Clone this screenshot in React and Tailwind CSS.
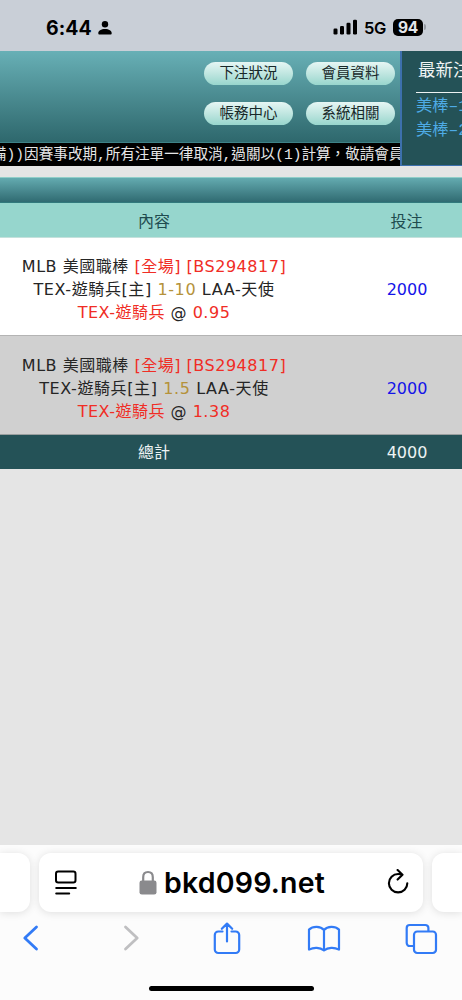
import React from "react";

const MENU = ["下注狀況", "會員資料", "帳務中心", "系統相關"];

const BETS = [
  { id: 1, bg: "bg-white h-[98px] border-[#b4b4b4]", pad: "pt-[5px]", line: "1-10", odds: "0.95" },
  { id: 2, bg: "bg-[#d0d0d0] h-[99px] border-[#9a9f9f]", pad: "pt-[6px]", line: "1.5", odds: "1.38" },
];

const SANS = "font-['DejaVu_Sans','Noto_Sans_CJK_TC',sans-serif]";
const MONO = "font-['Liberation_Mono','Noto_Sans_CJK_TC',monospace]";

function StatusBar() {
  return (
    <div className="flex h-[51px] shrink-0 items-start bg-[#c9cfd7] pt-[18px] font-['Inter',sans-serif] text-black">
      <span className="ml-[46px] w-[47px] text-[19.5px] leading-5 font-bold tracking-[0.05px]">6:44</span>
      <svg className="mt-[3px] ml-[5px]" width="14" height="14" viewBox="0 0 14 14">
        <circle cx="7" cy="3.3" r="3.2" />
        <path d="M.3 12.300C.3 9.700 3 8 7 8s6.700 1.700 6.700 4.300c0 .8-.4 1.200-1.200 1.200h-11c-.8 0-1.200-.4-1.200-1.200z" />
      </svg>
      <div className="grow" />
      <svg className="mt-[1px]" width="25" height="16" viewBox="0 0 25 16">
        <rect x=".5" y="9.500" width="4" height="6" rx="1.200" />
        <rect x="7" y="7" width="4" height="8.500" rx="1.200" />
        <rect x="13.500" y="3.800" width="4" height="11.700" rx="1.200" />
        <rect x="20" y=".8" width="4" height="14.700" rx="1.200" />
      </svg>
      <span className="ml-[6px] w-[23px] text-[16.5px] leading-5 font-semibold tracking-[-0.4px]">5G</span>
      <div className="ml-[6px] mt-[1px] h-[17px] w-[30px] rounded-[5px] bg-black text-center text-[15.5px] leading-[18px] font-bold tracking-[-0.2px] text-[#e3e6eb]">
        94
      </div>
      <div className="mt-[6px] mr-[36px] ml-[1px] h-[6px] w-[2px] rounded-r-full bg-[#979ca3]" />
    </div>
  );
}

function Header() {
  return (
    <div className="flex h-[115px] shrink-0">
      <div className="flex w-[400px] shrink-0 flex-col">
        <div className="h-[92px] border-b border-[#3e8287] bg-linear-to-b from-[#68b0b6] to-[#2e686d] pt-[11px] pl-[204px]">
          <div className="grid w-[191px] grid-cols-[89px_89px] gap-x-[13px] gap-y-[17px]">
            {MENU.map((label) => (
              <button
                key={label}
                className={`h-[23px] rounded-full bg-linear-to-b from-[#e6f6f4] to-[#98d6cd] pt-px text-center text-[14.5px] leading-[22px] whitespace-nowrap text-[#172829] ${MONO}`}
              >
                {label}
              </button>
            ))}
          </div>
        </div>
        <div className={`h-[23px] overflow-hidden bg-black text-[14.6px] leading-[24px] whitespace-nowrap text-[#e6e6e6] ${MONO}`}>
          <div className="ml-[-8px]">備))因賽事改期,所有注單一律取消,過關以(1)計算，敬請會員</div>
        </div>
      </div>
      <div className={`w-[62px] overflow-hidden border-b border-l-2 border-[#3d70ad] bg-[#245257] whitespace-nowrap ${MONO}`}>
        <div className="pt-[8px] pl-[16px] text-[17.5px] leading-6 text-[#f0f5f5]">最新注</div>
        <div className="mt-[9px] ml-[14px] border-t border-[#edf3f3] pt-[2px] text-[16.3px] leading-6 text-[#4eabe5]">
          <div>美棒–1</div>
          <div>美棒–2</div>
        </div>
      </div>
    </div>
  );
}

function BetTable() {
  return (
    <div className={`text-[16px] leading-[23px] whitespace-nowrap text-[#252525] ${SANS}`}>
      <div className="h-[26px] border-t border-b border-t-[#91cec9] border-b-[#327a7d] bg-linear-to-b from-[#64abb0] to-[#306b72]" />
      <div className="grid h-[35px] grid-cols-[308px_154px] items-center border-b border-[#c5e1dc] bg-[#96d6cd] pt-[2px] text-center text-[#204b4f]">
        <span>內容</span>
        <span className="pr-[3px] pl-[46px]">投注</span>
      </div>
      {BETS.map((bet) => (
        <div key={bet.id} className={`grid grid-cols-[308px_154px] items-center border-b text-center ${bet.bg} ${bet.pad}`}>
          <div>
            <div className="tracking-[0.52px]">
              MLB 美國職棒 <span className="text-[#f02d25]">[全場] [BS294817]</span>
            </div>
            <div className="tracking-[0.6px]">
              TEX-遊騎兵[主] <span className="text-[#b5923a]">{bet.line}</span> LAA-天使
            </div>
            <div className="tracking-[0.5px]">
              <span className="text-[#f02d25]">TEX-遊騎兵</span> @ <span className="text-[#f02d25]">{bet.odds}</span>
            </div>
          </div>
          <div className="pr-[3px] pl-[47px] text-[#1414e8]">2000</div>
        </div>
      ))}
      <div className="grid h-[34px] grid-cols-[308px_154px] items-center bg-[#245257] text-center text-[#edf3f3]">
        <span>總計</span>
        <span className="pr-[3px] pl-[47px]">4000</span>
      </div>
    </div>
  );
}

function BrowserBar() {
  return (
    <div className="flex h-[155px] shrink-0 flex-col bg-[#fcfcfc]">
      <div className="flex h-[77px] justify-between overflow-hidden pt-[8px]">
        <div className="h-[59px] w-[30px] rounded-r-[12px] bg-white shadow-[0_1px_9px_rgba(0,0,0,0.12)]" />
        <div className="flex h-[59px] w-[384px] items-center rounded-[12px] bg-white shadow-[0_1px_9px_rgba(0,0,0,0.12)]">
          <svg className="ml-[15px] shrink-0" width="24" height="28" viewBox="0 0 24 28" fill="none" stroke="#000" strokeWidth="2" strokeLinecap="round">
            <rect x="2" y="2.500" width="19.500" height="11" rx="2.200" />
            <path d="M2.200 19h19.600M2.200 24.500h13" />
          </svg>
          <svg className="ml-[61px] shrink-0" width="18" height="26" viewBox="0 0 18 26">
            <path d="M4.200 12V7.200C4.200 4 6.100 2 9 2s4.800 2 4.800 5.200V12" fill="none" stroke="#8a8a8d" strokeWidth="2.200" />
            <rect x=".5" y="10.500" width="17" height="14" rx="2.300" fill="#8a8a8d" />
          </svg>
          <span className="ml-[7px] w-[162px] font-['Inter',sans-serif] text-[28.500px] leading-8 font-semibold tracking-[0.2px] text-black">bkd099.net</span>
          <svg className="ml-[60px] shrink-0" width="24" height="28" viewBox="0 0 24 28" fill="none" stroke="#000" strokeWidth="2.100" strokeLinecap="round" strokeLinejoin="round">
            <path d="M21.300 14.200a9.200 9.200 0 1 1-9.200-9.200c1.500 0 2.900.2 4.200.7M11.600 1l4.900 4.700-4.900 4.900" />
          </svg>
        </div>
        <div className="h-[59px] w-[30px] rounded-l-[12px] bg-white shadow-[0_1px_9px_rgba(0,0,0,0.12)]" />
      </div>
      <div className="flex h-[36px] items-start justify-between pr-[23px] pl-[15px] text-[#327bf6]">
        <svg width="36" height="34" viewBox="0 0 36 34" fill="none" stroke="currentColor" strokeWidth="2.800" strokeLinecap="round" strokeLinejoin="round">
          <path d="M21.500 5 9.800 16l11.700 11" />
        </svg>
        <svg width="36" height="34" viewBox="0 0 36 34" fill="none" stroke="#bfbfc1" strokeWidth="2.800" strokeLinecap="round" strokeLinejoin="round">
          <path d="m13.500 5 11.700 11-11.700 11" />
        </svg>
        <svg width="36" height="36" viewBox="0 0 36 36" fill="none" stroke="currentColor" strokeWidth="2.200" strokeLinecap="round" strokeLinejoin="round">
          <path d="M13.500 9.500H9.300a3.500 3.500 0 0 0-3.500 3.500v14.500A3.500 3.500 0 0 0 9.300 31h17.400a3.500 3.500 0 0 0 3.500-3.500V13a3.500 3.500 0 0 0-3.500-3.500h-4.200M18 19.500V2M12.800 6.800 18 1.600l5.200 5.200" />
        </svg>
        <svg width="36" height="34" viewBox="0 0 36 34" fill="none" stroke="currentColor" strokeWidth="2.200" strokeLinecap="round" strokeLinejoin="round">
          <path d="M18 8v20.500M18 8C14.500 3.900 7 3.700 3 7.600v20c4.800-2.600 11-2.400 15 .9 4-3.300 10.200-3.500 15-.9v-20C29 3.700 21.500 3.900 18 8z" />
        </svg>
        <svg width="36" height="34" viewBox="0 0 36 34" fill="none" stroke="currentColor" strokeWidth="2.200" strokeLinecap="round" strokeLinejoin="round">
          <rect x="11" y="9.500" width="22" height="21.500" rx="3.200" />
          <path d="M10.500 24H6.700a3 3 0 0 1-3-3V6a3 3 0 0 1 3-3h15.700a3 3 0 0 1 3 3v3" />
        </svg>
      </div>
      <div className="mt-[28px] h-[5px] w-[165px] self-center rounded-full bg-black" />
    </div>
  );
}

export default function App() {
  return (
    <div className="flex h-[1000px] w-[462px] flex-col overflow-hidden bg-[#e5e5e5]">
      <StatusBar />
      <Header />
      <div className="h-[11px] shrink-0" />
      <BetTable />
      <div className="grow" />
      <BrowserBar />
    </div>
  );
}
